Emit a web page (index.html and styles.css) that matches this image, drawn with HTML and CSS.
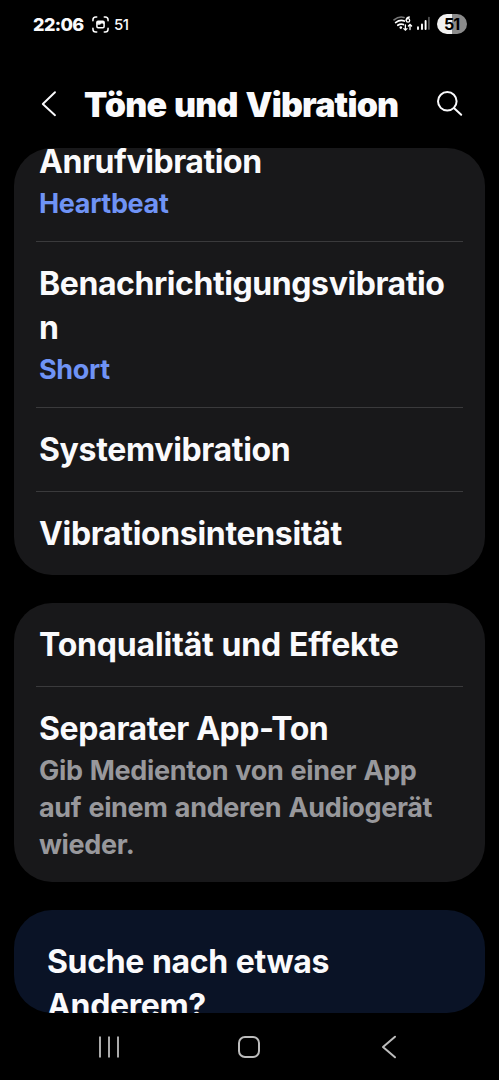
FILE: index.html
```
<!DOCTYPE html>
<html lang="de">
<head>
<meta charset="utf-8">
<title>Töne und Vibration</title>
<link rel="stylesheet" href="styles.css">
</head>
<body>
<div class="screen">
  <div class="status">
    <div class="status-left">
      <span class="clock">22:06</span>
      <svg class="capture" width="17" height="17" viewBox="0 0 18 18" fill="none" stroke="#fff" stroke-width="1.6" stroke-linecap="round">
        <path d="M1 5V4a3 3 0 0 1 3-3h1M13 1h1a3 3 0 0 1 3 3v1M17 13v1a3 3 0 0 1-3 3h-1M5 17H4a3 3 0 0 1-3-3v-1"/>
        <rect x="5.2" y="5.6" width="7.6" height="6.8" rx="1.2"/>
        <path d="M5.5 8.2V6h7v2l-2-.8-2 1.4z" fill="#fff" stroke-width="1"/>
      </svg>
      <span class="count">51</span>
    </div>
    <div class="status-right">
      <svg width="38" height="18" viewBox="0 0 38 18" fill="none" stroke-linecap="round">
        <path d="M1 4.8Q6 .8 11 2.4" stroke="#777" stroke-width="1.6"/>
        <path d="M2.6 7.6Q7 4.2 11.4 6M4.8 10.3Q7.6 8.3 10.4 9.6" stroke="#fff" stroke-width="1.7"/>
        <circle cx="7.8" cy="12.6" r="1.3" fill="#fff"/>
        <path d="M16.3 2Q13.2 2.6 13.2 5.3" stroke="#fff" stroke-width="1.3"/>
        <circle cx="15" cy="5.4" r="1.7" stroke="#fff" stroke-width="1.3"/>
        <path d="M12.4 10v5M10.8 13.6l1.6 1.6 1.6-1.6M17 14.5v-5M15.4 11l1.6-1.6 1.6 1.6" stroke="#fff" stroke-width="1.3"/>
        <path d="M25 12.3v1.7M29 9.5V14M32.6 6v8" stroke="#fff" stroke-width="1.9"/>
        <path d="M35.9 2.5V14" stroke="#555" stroke-width="1.7"/>
      </svg>
      <span class="battery">51</span>
    </div>
  </div>
  <header class="header">
    <svg class="back" width="16" height="28" viewBox="0 0 16 28" fill="none" stroke="#fafafc" stroke-width="1.9" stroke-linecap="round" stroke-linejoin="round"><path d="M14 2.2 1.8 14 14 25.2"/></svg>
    <h1 class="title">Töne und Vibration</h1>
    <svg class="search" width="28" height="28" viewBox="0 0 28 28" fill="none" stroke="#fafafc" stroke-width="2" stroke-linecap="round"><circle cx="11.3" cy="11.3" r="9.3"/><path d="m18.2 18.2 7 6.6"/></svg>
  </header>
  <main class="content">
    <section class="card">
      <div class="row cut"><div class="name tight">Anrufvibration</div><div class="value">Heartbeat</div></div>
      <div class="row"><div class="name tight">Benachrichtigungsvibration</div><div class="value">Short</div></div>
      <div class="row"><div class="name">Systemvibration</div></div>
      <div class="row"><div class="name">Vibrationsintensität</div></div>
    </section>
    <section class="card">
      <div class="row"><div class="name wide">Tonqualität und Effekte</div></div>
      <div class="row"><div class="name tight">Separater App-Ton</div><div class="value note">Gib Medienton von einer App<br>auf einem anderen Audiogerät<br>wieder.</div></div>
    </section>
    <section class="card suggest"><div class="name">Suche nach etwas<br>Anderem?</div></section>
  </main>
  <nav class="nav">
    <svg width="22" height="24" viewBox="0 0 22 24" stroke="#aaa" stroke-width="2"><path d="M2 1.5v21M11 1.5v21M20 1.5v21"/></svg>
    <svg width="24" height="24" viewBox="0 0 24 24" fill="none" stroke="#bcbcbc" stroke-width="2"><rect x="2" y="2" width="20" height="20" rx="6"/></svg>
    <svg width="16" height="24" viewBox="0 0 16 24" fill="none" stroke="#bcbcbc" stroke-width="2" stroke-linecap="round" stroke-linejoin="round"><path d="M14 1.7 2 12l12 10.3"/></svg>
  </nav>
</div>
</body>
</html>
```
FILE: styles.css
```
* { box-sizing: border-box; }
body { margin: 0; background: #000; color: #fafafc; font-family: Inter, "Liberation Sans", sans-serif; }
.screen { width: 499px; height: 1080px; display: flex; flex-direction: column; overflow: hidden; background: #000; }
.status { height: 60px; padding: 13px 33px 0; display: flex; justify-content: space-between; align-items: flex-start; }
.status-left { display: flex; align-items: center; height: 22px; }
.clock { font-size: 18px; font-weight: 800; letter-spacing: -0.6px; width: 59px; white-space: nowrap; }
.count { font-size: 15px; font-weight: 500; margin-left: 5px; letter-spacing: -0.6px; }
.status-right { display: flex; align-items: center; height: 22px; }
.battery { width: 30px; height: 20px; margin: 0 -1px 0 6px; border-radius: 10px; background: linear-gradient(90deg, #f2f2f2 50%, #8b8b8b 50%); color: #000; font-size: 16px; line-height: 20px; font-weight: 700; text-align: center; letter-spacing: -1px; text-indent: -1px; }
.header { height: 88px; padding: 0 35px 0 41px; display: flex; align-items: center; }
.title { flex: 1; margin: 2px 0 0 27px; font-size: 34px; font-weight: 900; line-height: 44px; white-space: nowrap; letter-spacing: -0.8px; word-spacing: 1.7px; }
.content { height: 865px; padding: 0 14px; overflow: hidden; display: flex; flex-direction: column; gap: 28px; }
.card { flex: none; border-radius: 38px; background: #18181a; padding: 0 22px; overflow: hidden; }
.row { padding: 20px 3px 19px; border-bottom: 1px solid #3a3a3c; }
.row:last-child { border-bottom: 0; }
.cut { margin-top: -28px; }
.name { font-size: 32px; line-height: 44px; font-weight: 700; letter-spacing: -0.33px; overflow-wrap: anywhere; }
.tight { letter-spacing: -0.42px; }
.wide { letter-spacing: -0.18px; word-spacing: 0.5px; }
.value { margin-top: 1px; font-size: 27px; line-height: 37px; font-weight: 700; letter-spacing: -0.35px; color: #6f93f5; }
.note { color: #98989c; white-space: nowrap; word-spacing: 1.2px; }
.suggest { height: 103px; padding: 30px 33px 0; background: #0a1326; }
.suggest .name { word-spacing: 0.6px; }
.nav { height: 67px; padding: 0 102px 0 98px; display: flex; align-items: center; justify-content: space-between; }
.nav svg:nth-child(2) { margin-right: 4px; }
```
